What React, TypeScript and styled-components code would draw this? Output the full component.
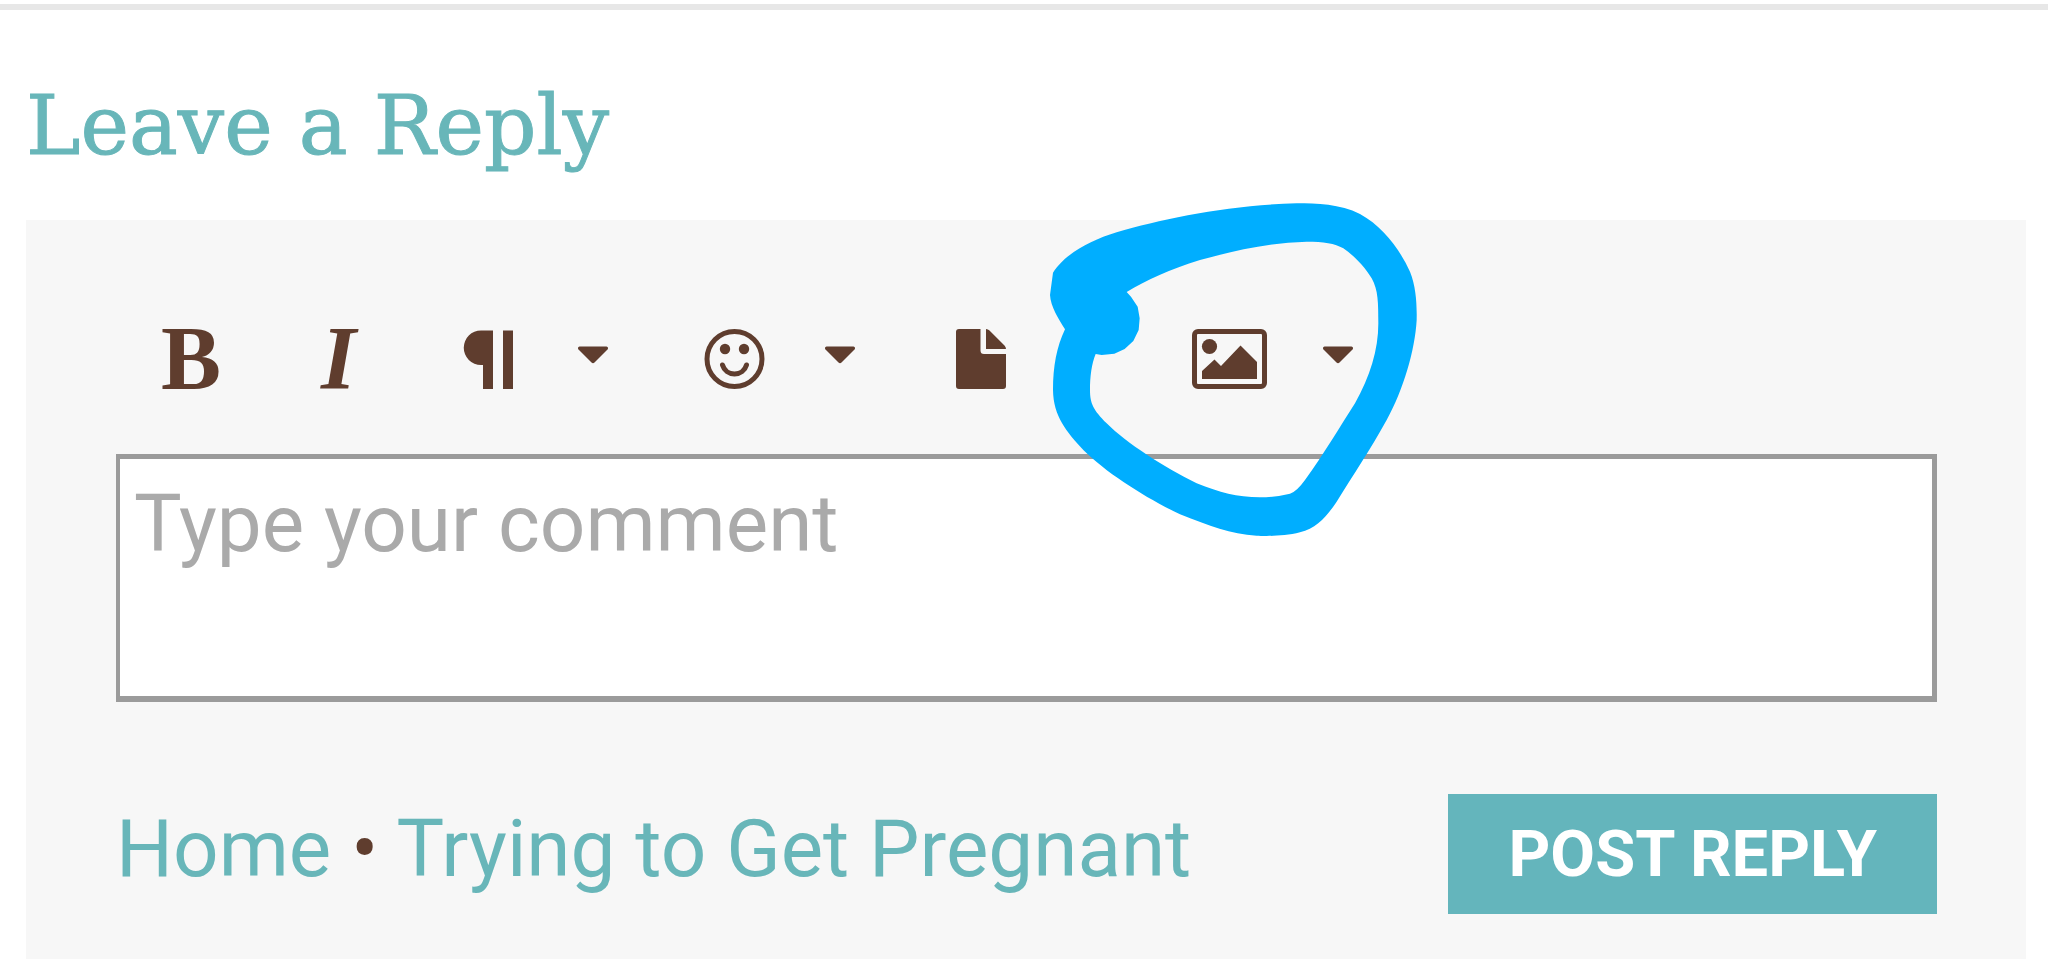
import React from "react";
import styled, { createGlobalStyle } from "styled-components";

const teal = "#68b6b9";
const brown = "#5f3d2e";

const GlobalStyle = createGlobalStyle`
  *, *::before, *::after { box-sizing: border-box; }
  body {
    margin: 0;
    background: #fff;
    color: ${brown};
    font-family: Roboto, "Liberation Sans", sans-serif;
  }
`;

const Page = styled.main`
  padding: 4px 22px 0 26px;
`;

const Rule = styled.hr`
  height: 6px;
  margin: 0 -22px 0 -26px;
  border: 0;
  background: #e7e7e7;
`;

const Title = styled.h2`
  margin: 68px 0 46px;
  color: ${teal};
  font: 400 82px/96px "DejaVu Serif", serif;
  -webkit-text-stroke: 1px ${teal};
`;

const Panel = styled.form`
  position: relative;
  padding: 0 89px 45px 90px;
  background: #f7f7f7;
`;

const Toolbar = styled.div`
  display: flex;
  align-items: center;
  gap: 96px;
  padding: 109px 45px 65px;
`;

const ToolGroup = styled.div<{ $apart?: boolean }>`
  display: flex;
  gap: 56px;
  margin-left: ${(p) => (p.$apart ? "85px" : "0")};
`;

const IconButton = styled.button`
  flex: none;
  height: 60px;
  padding: 0;
  border: 0;
  background: none;
  color: inherit;
  cursor: pointer;

  svg { display: block; fill: currentColor; }
`;

const LetterButton = styled(IconButton)<{ $italic?: boolean }>`
  width: ${(p) => (p.$italic ? "46px" : "64px")};
  font: ${(p) => (p.$italic ? "italic" : "normal")} 700 90px/60px "Liberation Serif", serif;
  text-align: left;
`;

const Comment = styled.textarea`
  display: block;
  width: 100%;
  height: 248px;
  padding: 18px 14px;
  border: solid #9b9b9b;
  border-width: 5px 5px 6px 4px;
  border-radius: 0;
  outline: 0;
  resize: none;
  background: #fff;
  color: ${brown};
  font: 400 80px/94px Roboto, "Liberation Sans", sans-serif;

  &::placeholder { color: #aaa; opacity: 1; }
`;

const Footer = styled.footer`
  display: flex;
  justify-content: space-between;
  align-items: flex-start;
  margin-top: 92px;
`;

const Crumbs = styled.nav`
  font-size: 80px;
  line-height: 110px;
`;

const Crumb = styled.a`
  color: ${teal};
  text-decoration: none;
`;

const PostButton = styled.button`
  height: 120px;
  padding: 0 60px;
  border: 0;
  background: #64b5bc;
  color: #fff;
  font: 700 65px/120px Roboto, "Liberation Sans", sans-serif;
  white-space: nowrap;
  cursor: pointer;
`;

const Scribble = styled.svg`
  position: absolute;
  top: -30px;
  left: 1004px;
  pointer-events: none;
  fill: #00aeff;
`;

const Caret = ({ label }: { label: string }) => (
  <IconButton type="button" aria-label={label}>
    <svg width="30" height="60" viewBox="0 0 30 60">
      <path d="M1.5 17.500h27q2.500 1 1 3L16.500 33.500q-1.500 1.500-3 0L.5 20.500q-1.500-2 1-3z" />
    </svg>
  </IconButton>
);

export default function App() {
  return (
    <>
      <GlobalStyle />
      <Page>
        <Rule />
        <Title>Leave a Reply</Title>
        <Panel onSubmit={(e) => e.preventDefault()}>
          <Toolbar role="toolbar" aria-label="Formatting">
            <LetterButton type="button" aria-label="Bold">B</LetterButton>
            <LetterButton type="button" aria-label="Italic" $italic>I</LetterButton>
            <ToolGroup>
              <IconButton type="button" aria-label="Paragraph format">
                <svg width="59" height="60" viewBox="0 0 59 60">
                  <path d="M18 1.500H30V61H20V36H18A17.250 17.250 0 0 1 18 1.500zM40 1.500h10V61H40z" />
                </svg>
              </IconButton>
              <Caret label="Paragraph options" />
            </ToolGroup>
            <ToolGroup>
              <IconButton type="button" aria-label="Emoji">
                <svg width="65" height="60" viewBox="0 0 65 60">
                  <circle cx="30.500" cy="30" r="27.500" fill="none" stroke="currentColor" strokeWidth="5" />
                  <circle cx="21" cy="20" r="5.200" />
                  <circle cx="40" cy="20" r="5.200" />
                  <path d="M18.500 36a12.500 12.500 0 0 0 24 0" fill="none" stroke="currentColor" strokeWidth="5" strokeLinecap="round" />
                </svg>
              </IconButton>
              <Caret label="Emoji options" />
            </ToolGroup>
            <IconButton type="button" aria-label="Attach file">
              <svg width="60" height="60" viewBox="0 0 60 60">
                <path d="M8 0H29.500V21.500Q29.500 25 33 25H55V57Q55 60 52 60H8Q5 60 5 57V3Q5 0 8 0zM35 0Q37 0 38.500 1.500L53.500 16.500Q55 18 55 20H35z" />
              </svg>
            </IconButton>
            <ToolGroup $apart>
              <IconButton type="button" aria-label="Insert image">
                <svg width="75" height="60" viewBox="0 0 75 60">
                  <rect x="2.500" y="2.500" width="70" height="55" rx="3.500" fill="none" stroke="currentColor" strokeWidth="5" />
                  <circle cx="17.500" cy="17.500" r="7.600" />
                  <path d="M10 50V42L22.500 30.500L29 37L48.500 16.500L65 33V50z" />
                </svg>
              </IconButton>
              <Caret label="Image options" />
            </ToolGroup>
          </Toolbar>
          <Comment aria-label="Comment" placeholder="Type your comment" />
          <Footer>
            <Crumbs aria-label="Breadcrumb">
              <Crumb href="#home">Home</Crumb> • <Crumb href="#trying">Trying to Get Pregnant</Crumb>
            </Crumbs>
            <PostButton type="submit">POST REPLY</PostButton>
          </Footer>
          <Scribble width="400" height="360" viewBox="0 0 1200 1080" aria-hidden="true">
            <path
              fillRule="evenodd"
              d="M105 418C85 385 62 350 60 315L69 248Q76 234 105 206C150 170 200 145 260 127C400 85 600 45 800 40C860 40 930 42 990 72C1060 110 1110 180 1140 245C1158 290 1161 340 1160 390C1155 480 1120 600 1070 690C1020 780 970 855 920 935C890 980 860 1015 810 1027C760 1040 700 1038 680 1037C600 1033 540 1008 450 973C350 925 230 850 160 780C110 725 70 680 69 600C69 530 80 470 105 418Z
              M197 492C185 520 180 560 180 600C180 640 190 660 230 700C290 760 400 830 500 880C570 908 620 922 690 922Q735 922 780 911Q800 905 825 870C880 795 930 710 975 640C1020 560 1045 480 1045 400C1045 340 1045 300 1025 265C1000 225 975 200 940 175C915 160 880 155 830 155C720 158 620 180 510 210C420 238 350 270 290 306L303 320L323 350L329 385L326 420L310 453L284 477L253 491L215 495Z"
            />
          </Scribble>
        </Panel>
      </Page>
    </>
  );
}
